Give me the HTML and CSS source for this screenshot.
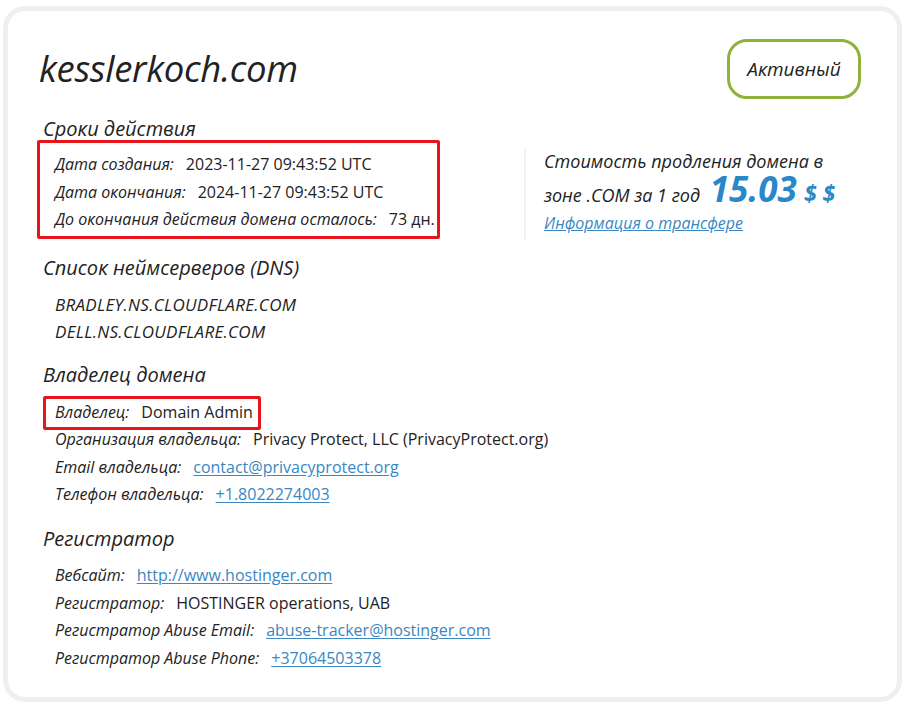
FILE: index.html
```html
<!DOCTYPE html>
<html lang="ru">
<head>
<meta charset="utf-8">
<title>kesslerkoch.com</title>
<link rel="stylesheet" href="styles.css">
</head>
<body>
<div class="card">
  <div class="top">
    <h1 class="domain">kesslerkoch.com</h1>
    <div class="badge">Активный</div>
  </div>

  <h2 class="sec sec-first">Сроки действия</h2>
  <div class="dates-row">
    <div class="hl hl-dates">
      <div class="row"><span class="lbl">Дата создания:</span><span class="val">2023-11-27 09:43:52 UTC</span></div>
      <div class="row"><span class="lbl">Дата окончания:</span><span class="val">2024-11-27 09:43:52 UTC</span></div>
      <div class="row"><span class="lbl">До окончания действия домена осталось:</span><span class="val">73 дн.</span></div>
    </div>
    <div class="price">
      <div class="price-line">Стоимость продления домена в</div>
      <div class="price-line price-line-2">зоне .COM за 1 год <span class="amount">15.03</span><span class="cur">$ $</span></div>
      <a class="transfer" href="#">Информация о трансфере</a>
    </div>
  </div>

  <h2 class="sec sec-dns">Список неймсерверов (DNS)</h2>
  <div class="list">
    <div class="row row-ns"><span class="ns">BRADLEY.NS.CLOUDFLARE.COM</span></div>
    <div class="row row-ns"><span class="ns">DELL.NS.CLOUDFLARE.COM</span></div>
  </div>

  <h2 class="sec">Владелец домена</h2>
  <div class="list">
    <div class="hl hl-owner"><div class="row"><span class="lbl">Владелец:</span><span class="val">Domain Admin</span></div></div>
    <div class="row"><span class="lbl">Организация владельца:</span><span class="val">Privacy Protect, LLC (PrivacyProtect.org)</span></div>
    <div class="row"><span class="lbl">Email владельца:</span><a class="val link" href="#">contact@privacyprotect.org</a></div>
    <div class="row"><span class="lbl">Телефон владельца:</span><a class="val link" href="#">+1.8022274003</a></div>
  </div>

  <h2 class="sec">Регистратор</h2>
  <div class="list">
    <div class="row"><span class="lbl">Вебсайт:</span><a class="val link" href="#">http://www.hostinger.com</a></div>
    <div class="row"><span class="lbl">Регистратор:</span><span class="val">HOSTINGER operations, UAB</span></div>
    <div class="row"><span class="lbl">Регистратор Abuse Email:</span><a class="val link" href="#">abuse-tracker@hostinger.com</a></div>
    <div class="row"><span class="lbl">Регистратор Abuse Phone:</span><a class="val link" href="#">+37064503378</a></div>
  </div>
</div>
</body>
</html>
```

FILE: styles.css
```css
html, body {
  margin: 0;
  padding: 0;
  background: #ffffff;
}
body {
  padding: 6px 6px 9px 3px;
  font-family: "Open Sans", "Noto Sans", sans-serif;
  color: #222222;
}
.card {
  border: 5px solid #efefef;
  border-radius: 22px;
  background: #ffffff;
  height: 696px;
  box-sizing: border-box;
  padding: 26px 36px 0 31px;
}
.top {
  display: flex;
  justify-content: space-between;
  align-items: flex-start;
}
.domain {
  margin: 11px 0 0 0;
  font-size: 36.5px;
  font-style: italic;
  font-weight: 500;
  line-height: 40px;
  letter-spacing: -0.3px;
  color: #222;
}
.badge {
  margin-top: 2px;
  width: 134px;
  height: 60px;
  box-sizing: border-box;
  border: 3px solid #8fb33a;
  border-radius: 20px;
  display: flex;
  align-items: center;
  justify-content: center;
  font-size: 19px;
  font-style: italic;
  color: #222;
}
.sec {
  margin: 16px 0 0 4px;
  font-size: 20px;
  font-style: italic;
  font-weight: 400;
  line-height: 28px;
  color: #222;
}
.sec-dns {
  margin-top: 14px;
}
.dates-row {
  display: flex;
  align-items: flex-start;
}
.hl {
  border: 3px solid #e8141b;
  border-radius: 2px;
}
.hl-dates {
  margin: -3px 0 0 -2px;
  padding: 8px 3px 2px 15px;
  width: 403px;
  box-sizing: border-box;
}
.row {
  display: flex;
  align-items: baseline;
  height: 27.7px;
  line-height: 27.7px;
  white-space: nowrap;
}
.row-ns {
  height: 27px;
  line-height: 27px;
}
.lbl {
  font-style: italic;
  font-size: 16px;
  font-weight: 500;
  margin-right: 12px;
}
.val {
  font-size: 16px;
  color: #222;
}
.link {
  color: #3a87c2;
  text-decoration: underline;
  text-underline-offset: 2px;
}
.price {
  margin: 5px 0 0 84px;
  border-left: 2px solid #f3f3f3;
  padding: 0 0 6px 18px;
}
.price-line {
  font-size: 18px;
  font-style: italic;
  font-weight: 500;
  line-height: 26px;
  white-space: nowrap;
}
.price-line-2 {
  height: 32px;
  line-height: 32px;
  margin-top: 2px;
}
.amount {
  display: inline-block;
  font-size: 35px;
  font-weight: 700;
  color: #2a87c8;
  margin-left: 5px;
  letter-spacing: 0;
  line-height: 26px;
}
.cur {
  display: inline-block;
  font-size: 23px;
  font-weight: 700;
  color: #2a87c8;
  margin-left: 7px;
  line-height: 20px;
}
.transfer {
  display: block;
  font-size: 16px;
  font-style: italic;
  font-weight: 500;
  color: #3a87c2;
  text-decoration: underline;
  line-height: 22px;
  margin-top: 4px;
}
.list {
  margin: 9px 0 0 16px;
}
.ns {
  font-style: italic;
  font-size: 17px;
  font-weight: 500;
  letter-spacing: 0.3px;
}
.hl-owner {
  display: inline-block;
  margin: -2px 0 -4px -12px;
  padding: 0 5px 0 9px;
}
.hl-owner .row {
  height: 28px;
}
```
